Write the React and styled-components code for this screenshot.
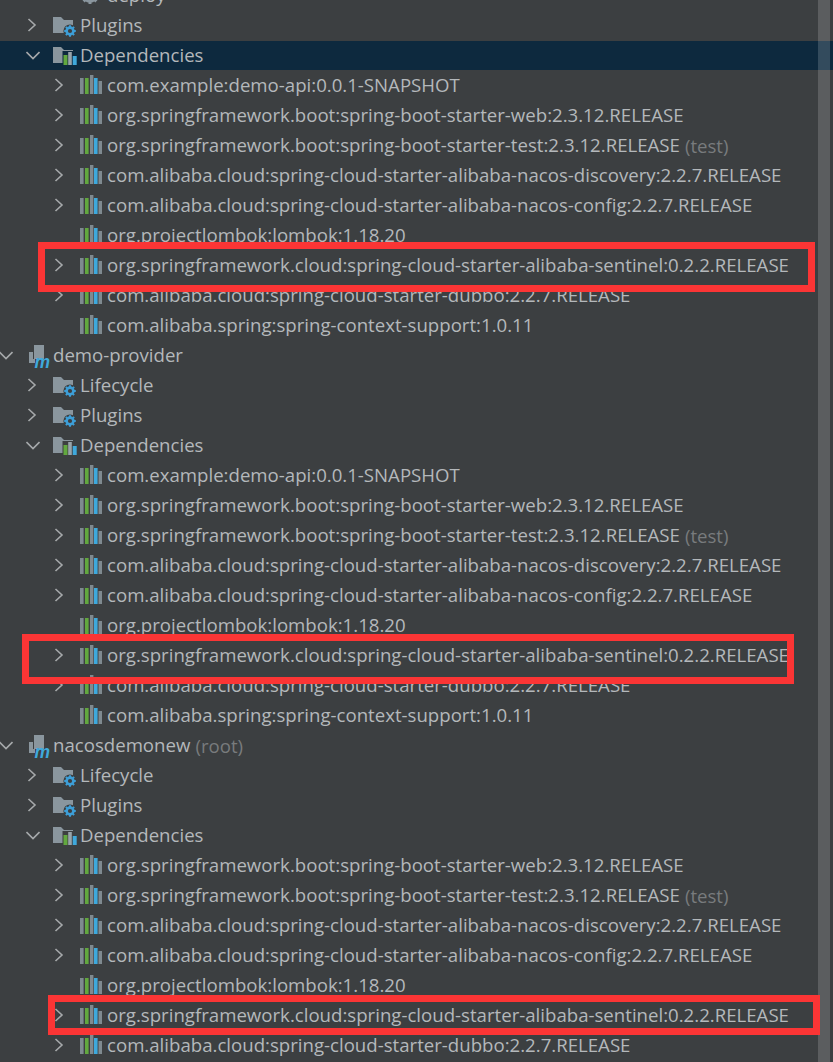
import React from "react";
import styled, { createGlobalStyle } from "styled-components";

const Global = createGlobalStyle`
  html, body {
    margin: 0;
    background: #3c3f41;
    overflow: hidden;
  }
`;

const Page = styled.div`
  position: relative;
  width: 833px;
  height: 1062px;
  overflow: hidden;
  background: #3c3f41;
  font-family: "Open Sans", "Noto Sans", sans-serif;
  font-size: 18.64px;
  color: #b4b8bb;
`;

const Tree = styled.div`
  margin-top: -20px;
`;

const Row = styled.div`
  display: flex;
  align-items: center;
  height: 30px;
  padding-left: ${(p) => p.$level * 27}px;
  background: ${(p) => (p.$selected ? "#0d293e" : "transparent")};
  box-shadow: ${(p) => (p.$selected ? "inset 0 1px #3c3f41" : "none")};
  white-space: nowrap;
`;

const ChevronSlot = styled.span`
  display: flex;
  align-items: center;
  width: 26px;
  height: 30px;
  flex: none;

  svg {
    margin-left: -1px;
  }
`;

const IconSlot = styled.span`
  display: flex;
  align-items: center;
  width: 27px;
  height: 30px;
  flex: none;
`;

const Label = styled.span`
  line-height: 30px;
`;

const Hint = styled.span`
  color: #787b7d;
  margin-left: 5px;
`;

const Highlight = styled.div`
  position: absolute;
  left: ${(p) => p.$x}px;
  top: ${(p) => p.$y}px;
  width: ${(p) => p.$w}px;
  height: ${(p) => p.$h}px;
  box-sizing: border-box;
  border: 7px solid #fb3535;
`;

const Scrollbar = styled.div`
  position: absolute;
  left: 818px;
  top: 0;
  width: 12px;
  height: 1062px;
  background: rgba(255, 255, 255, 0.16);
`;

function Chevron({ open }) {
  return (
    <svg width="14" height="14" viewBox="0 0 14 14" fill="none" stroke="#a6a9ab" strokeWidth="1.6">
      {open ? <path d="M0.5 4 L7 10.5 L13.5 4" /> : <path d="M2.5 1 L9 7 L2.5 13" />}
    </svg>
  );
}

function FolderBase() {
  return <path d="M0 4 H8 L11 7 H20 V20 H0 Z" fill="#8a969e" />;
}

function GearFolder() {
  return (
    <svg width="24" height="24" viewBox="0 0 24 24">
      <FolderBase />
      <circle cx="17" cy="18" r="6.6" fill="#3c3f41" />
      <circle cx="17" cy="18" r="3.4" fill="none" stroke="#3d9fd8" strokeWidth="2.6" />
      <path d="M17 12.2 V14 M17 22 V23.8 M11.2 18 H13 M21 18 H22.8 M12.9 13.9 L14.2 15.2 M19.8 20.8 L21.1 22.1 M21.1 13.9 L19.8 15.2 M14.2 20.8 L12.9 22.1" stroke="#3d9fd8" strokeWidth="2" />
    </svg>
  );
}

function DepsFolder({ selected }) {
  const gap = selected ? "#0d293e" : "#3c3f41";
  return (
    <svg width="24" height="24" viewBox="0 0 24 24">
      <FolderBase />
      <rect x="9.5" y="8" width="14.5" height="16" fill={gap} />
      <rect x="10.5" y="12" width="4" height="10" fill="#62a83f" />
      <rect x="15.2" y="9" width="3.6" height="13" fill="#9aa4aa" />
      <rect x="19.7" y="13" width="4" height="9" fill="#3fa9dc" />
    </svg>
  );
}

function Library() {
  return (
    <svg width="22" height="20" viewBox="0 0 22 20">
      <rect x="0" y="3" width="3.6" height="16" fill="#7f8a90" />
      <rect x="5" y="3" width="3.6" height="16" fill="#62a83f" />
      <rect x="10" y="0" width="3.4" height="19" fill="#7f8a90" />
      <rect x="14" y="3" width="3.6" height="16" fill="#3fa9dc" />
      <rect x="18.5" y="6" width="3.5" height="13" fill="#7f8a90" />
    </svg>
  );
}

function Module() {
  return (
    <svg width="27" height="30" viewBox="0 0 27 30">
      <path d="M8 5 H18 V19 H8 Z" fill="#8a969e" />
      <path d="M3 12 H7 V23 H3 Z" fill="#8a969e" />
      <path d="M7 19 H9 V23 H7 Z" fill="#8a969e" />
      <text x="8.5" y="28" fontFamily="Liberation Sans, sans-serif" fontSize="17.5" fontStyle="italic" fontWeight="700" fill="#3fa9dc">m</text>
    </svg>
  );
}

function Gear() {
  return (
    <svg width="20" height="20" viewBox="0 0 20 20">
      <circle cx="10" cy="10" r="6" fill="none" stroke="#8a969e" strokeWidth="3.4" />
      <path d="M10 1 V4 M10 16 V19 M1 10 H4 M16 10 H19 M3.6 3.6 L5.8 5.8 M14.2 14.2 L16.4 16.4 M16.4 3.6 L14.2 5.8 M5.8 14.2 L3.6 16.4" stroke="#8a969e" strokeWidth="3" />
    </svg>
  );
}

const icons = {
  gear: Gear,
  folder: GearFolder,
  deps: DepsFolder,
  lib: Library,
  module: Module,
};

const API = "com.example:demo-api:0.0.1-SNAPSHOT";
const WEB = "org.springframework.boot:spring-boot-starter-web:2.3.12.RELEASE";
const TEST = "org.springframework.boot:spring-boot-starter-test:2.3.12.RELEASE";
const DISCOVERY = "com.alibaba.cloud:spring-cloud-starter-alibaba-nacos-discovery:2.2.7.RELEASE";
const CONFIG = "com.alibaba.cloud:spring-cloud-starter-alibaba-nacos-config:2.2.7.RELEASE";
const LOMBOK = "org.projectlombok:lombok:1.18.20";
const SENTINEL = "org.springframework.cloud:spring-cloud-starter-alibaba-sentinel:0.2.2.RELEASE";
const DUBBO = "com.alibaba.cloud:spring-cloud-starter-dubbo:2.2.7.RELEASE";
const CONTEXT = "com.alibaba.spring:spring-context-support:1.0.11";

const lib = (text, extra) => ({ level: 2, icon: "lib", arrow: "closed", text, ...extra });
const leaf = (text) => ({ level: 2, icon: "lib", text });
const section = (text, extra) => ({ level: 1, icon: "folder", arrow: "closed", text, ...extra });

const rows = [
  { level: 2, icon: "gear", text: "deploy" },
  section("Plugins"),
  { level: 1, icon: "deps", arrow: "open", text: "Dependencies", selected: true },
  lib(API),
  lib(WEB),
  lib(TEST, { hint: "(test)" }),
  lib(DISCOVERY),
  lib(CONFIG),
  leaf(LOMBOK),
  lib(SENTINEL),
  lib(DUBBO),
  leaf(CONTEXT),
  { level: 0, icon: "module", arrow: "open", text: "demo-provider" },
  section("Lifecycle"),
  section("Plugins"),
  { level: 1, icon: "deps", arrow: "open", text: "Dependencies" },
  lib(API),
  lib(WEB),
  lib(TEST, { hint: "(test)" }),
  lib(DISCOVERY),
  lib(CONFIG),
  leaf(LOMBOK),
  lib(SENTINEL),
  lib(DUBBO),
  leaf(CONTEXT),
  { level: 0, icon: "module", arrow: "open", text: "nacosdemonew", hint: "(root)" },
  section("Lifecycle"),
  section("Plugins"),
  { level: 1, icon: "deps", arrow: "open", text: "Dependencies" },
  lib(WEB),
  lib(TEST, { hint: "(test)" }),
  lib(DISCOVERY),
  lib(CONFIG),
  leaf(LOMBOK),
  lib(SENTINEL),
  lib(DUBBO),
];

const boxes = [
  { x: 38, y: 242, w: 777, h: 50 },
  { x: 22, y: 634, w: 772, h: 50 },
  { x: 48, y: 995, w: 772, h: 40 },
];

export default function App() {
  return (
    <Page>
      <Global />
      <Tree>
        {rows.map((row, i) => {
          const Icon = icons[row.icon];
          return (
            <Row key={i} $level={row.level} $selected={row.selected}>
              <ChevronSlot>{row.arrow && <Chevron open={row.arrow === "open"} />}</ChevronSlot>
              <IconSlot>
                <Icon selected={row.selected} />
              </IconSlot>
              <Label>{row.text}</Label>
              {row.hint && <Hint>{row.hint}</Hint>}
            </Row>
          );
        })}
      </Tree>
      <Scrollbar />
      {boxes.map((b) => (
        <Highlight key={b.y} $x={b.x} $y={b.y} $w={b.w} $h={b.h} />
      ))}
    </Page>
  );
}
